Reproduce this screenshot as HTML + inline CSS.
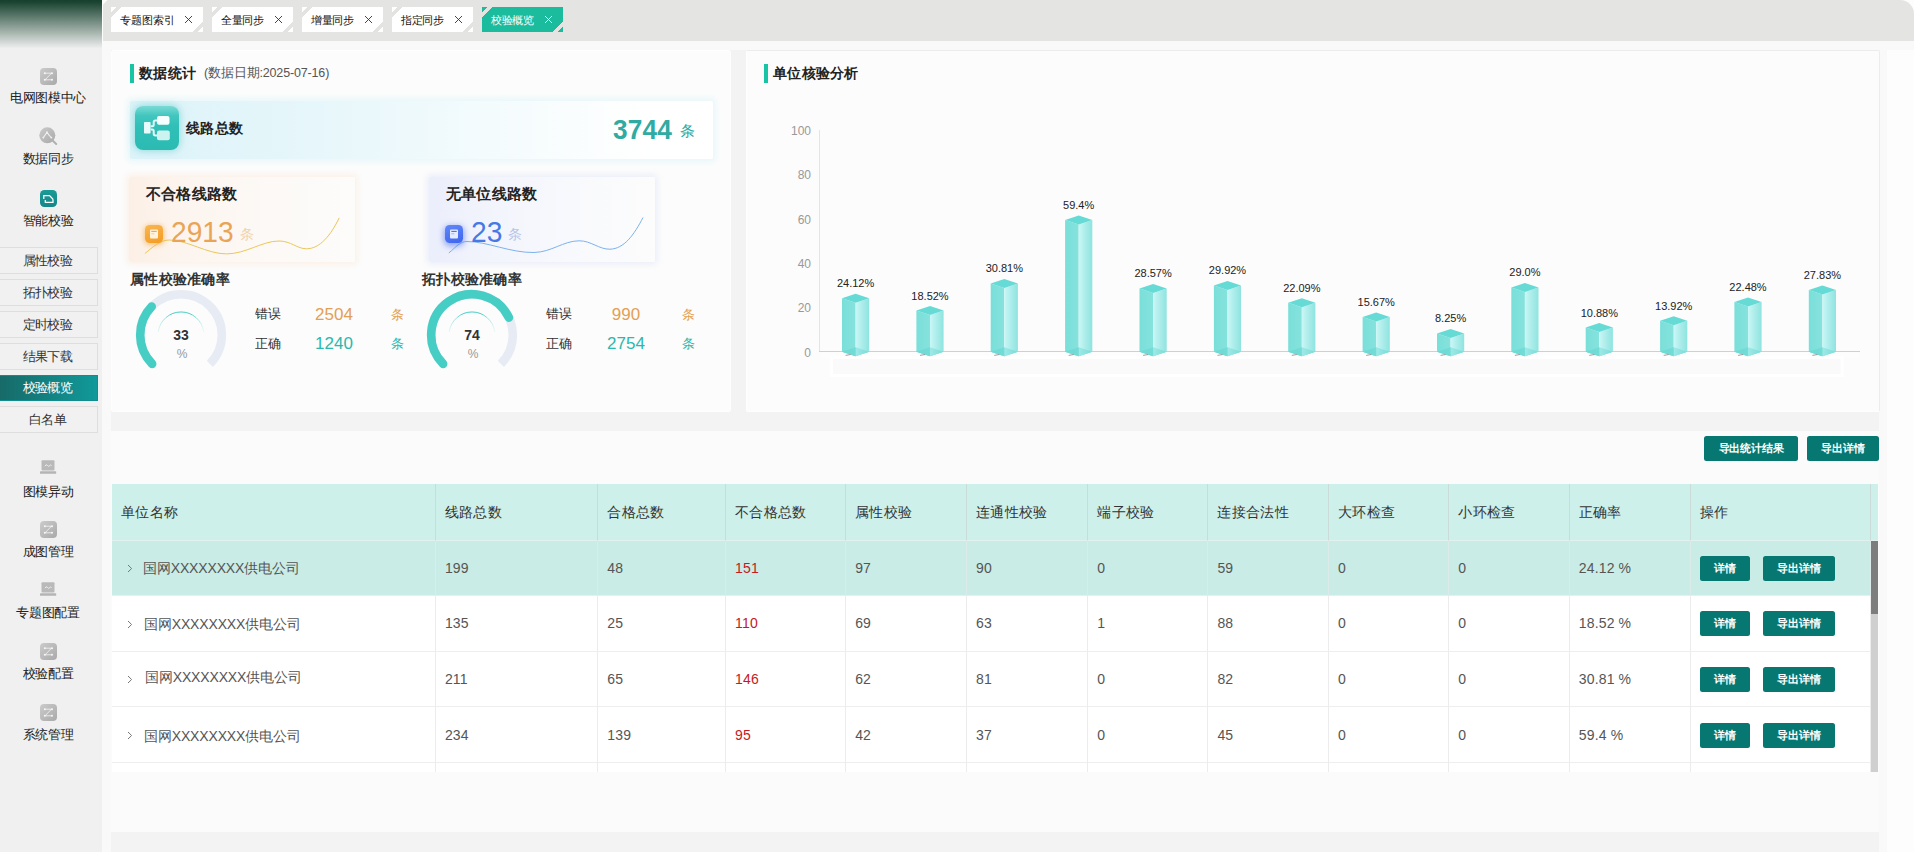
<!DOCTYPE html>
<html lang="zh"><head><meta charset="utf-8"><title>校验概览</title>
<style>
*{box-sizing:border-box;margin:0;padding:0}
html,body{width:1914px;height:852px;overflow:hidden;background:#fdfdfd;font-family:"Liberation Sans",sans-serif;color:#333}
.abs{position:absolute}
#side{position:absolute;left:0;top:0;width:102px;height:852px;background:#f0f0f0}
#sidetop{position:absolute;left:0;top:0;width:102px;height:50px;background:linear-gradient(to bottom,#163f2d 0%,#1c4533 5%,#f0f0f0 97%)}
.mi{position:absolute;left:0;width:96px;text-align:center;font-size:13px;letter-spacing:-0.3px;color:#222;line-height:16px;white-space:nowrap}
.sub{white-space:nowrap;overflow:hidden;position:absolute;left:-1px;width:99px;height:27px;border:1px solid #dedede;background:#f1f1f1;text-align:center;font-size:12.5px;letter-spacing:-0.6px;line-height:26.5px;color:#333;padding-right:2px}
.sub.on{height:26px;line-height:25px;background:linear-gradient(to right,#176a68,#11999a);border-color:#128d8d;color:#fff}
#topbar{position:absolute;left:103px;top:0;width:1811px;height:41px;background:linear-gradient(135deg,#fbfbfb 0,#fbfbfb 3px,#e4e4e3 3.6px);border-radius:0 14px 0 0}
.tab{position:absolute;top:7px;height:25px;width:91px;font-size:11px;letter-spacing:-0.45px;line-height:26.5px;color:#111;padding-left:9px;overflow:hidden;white-space:nowrap;
 background:linear-gradient(135deg,#fff 0,#fff 4.2px,#e3e3e2 4.2px,#e3e3e2 7.2px,#fff 7.2px,#fff 50%,transparent 50%),linear-gradient(315deg,#fff 0,#fff 4.2px,#e3e3e2 4.2px,#e3e3e2 7.3px,#fff 7.3px,#fff 50.5%,transparent 50.5%)}
.tab.on{color:#fff;background:linear-gradient(135deg,#1bbc9d 0,#1bbc9d 4.2px,#e3e3e2 4.2px,#e3e3e2 7.2px,#1bbc9d 7.2px,#1bbc9d 50%,transparent 50%),linear-gradient(315deg,#1bbc9d 0,#1bbc9d 4.2px,#e3e3e2 4.2px,#e3e3e2 7.3px,#1bbc9d 7.3px,#1bbc9d 50.5%,transparent 50.5%)}
.tab svg{position:absolute;left:72px;top:8.3px}
#main{position:absolute;left:102px;top:41px;width:1777px;height:811px;background:#f3f3f3}
#strip{position:absolute;left:102px;top:41px;width:1812px;height:9px;background:#f9f9f9}
#gut{position:absolute;left:102px;top:41px;width:9px;height:811px;background:#f9f9f9}
#rgut{position:absolute;left:1879px;top:41px;width:8px;height:811px;background:#f9f9f9}
.panel{position:absolute;background:#fcfcfc}
.ttl{position:absolute;font-size:14px;font-weight:bold;color:#222;line-height:18px;white-space:nowrap;letter-spacing:0.3px}
.tbar{position:absolute;width:4px;height:19px;background:#17c4a4}
.h2{position:absolute;font-size:14px;font-weight:bold;color:#333;line-height:18px;white-space:nowrap;letter-spacing:0.3px}
.lab{position:absolute;font-size:13px;color:#333;line-height:16px;white-space:nowrap;letter-spacing:-0.5px}
.num{position:absolute;font-size:17px;line-height:20px;white-space:nowrap;text-align:center;width:60px}
.unit{position:absolute;font-size:13px;line-height:16px;white-space:nowrap}
.or{color:#e3a052}.te{color:#2bb8ae}
.yl{position:absolute;width:30px;text-align:right;font-size:12px;color:#999;line-height:14px}
.bl{position:absolute;width:70px;text-align:center;font-size:11px;color:#222;line-height:14px;white-space:nowrap}
.btn{position:absolute;background:#067871;color:#fff;font-size:11px;font-weight:bold;text-align:center;border-radius:2.5px;white-space:nowrap;letter-spacing:-0.2px}
.th{position:absolute;top:484.4px;height:56.3px;background:#cdf0ea;border-right:1px solid #cbdcd8;border-bottom:1px solid #e2f1ee;font-size:14px;color:#333;line-height:57px;padding-left:9px;white-space:nowrap;letter-spacing:0.3px}
.td{position:absolute;height:56px;border-right:1px solid #ececec;border-bottom:1px solid #eeeeee;font-size:14px;color:#555;padding-left:9px;white-space:nowrap;background:#fff;letter-spacing:0.15px;overflow:hidden}
.td.hl{background:#c9ece6;border-right-color:#dcebe8;border-bottom-color:#e4f1ee}
.red{color:#c61a22}
</style></head><body>

<div id="side"><div id="sidetop"></div>
<svg class="abs" style="left:40px;top:68px" width="17" height="17" viewBox="0 0 17 17"><defs><linearGradient id="gg" x1="0" y1="0" x2="1" y2="1"><stop offset="0" stop-color="#cbcbcb"/><stop offset="1" stop-color="#a9a9a9"/></linearGradient></defs><rect x="0" y="0" width="17" height="17" rx="4" fill="url(#gg)"/><path d="M5 5.2h6.5M5 11.8h6.5M11.5 5.2L5 11.8" stroke="#f6f6f6" stroke-width="0.8" fill="none" stroke-linecap="round"/><circle cx="4.8" cy="5.2" r="1" fill="#f6f6f6"/><circle cx="12" cy="5.2" r="1" fill="#f6f6f6"/><circle cx="4.8" cy="11.8" r="1" fill="#f6f6f6"/><circle cx="12" cy="11.8" r="1" fill="#f6f6f6"/></svg>
<div class="mi" style="top:90px">电网图模中心</div>
<svg class="abs" style="left:39px;top:127px" width="19" height="19" viewBox="0 0 19 19"><circle cx="8.3" cy="8.3" r="8" fill="url(#gg)"/><path d="M13.6 13.6l3.6 3.4" stroke="#b0b0b0" stroke-width="2" stroke-linecap="round"/><path d="M4.3 10.6L8 5.2l2.2 3.2 2.2 2.2" stroke="#f0f0f0" stroke-width="1.1" fill="none" stroke-linecap="round" stroke-linejoin="round"/><circle cx="8" cy="5.2" r="0.9" fill="#f0f0f0"/><circle cx="4.3" cy="10.6" r="0.9" fill="#f0f0f0"/><circle cx="12.4" cy="10.6" r="0.9" fill="#f0f0f0"/></svg>
<div class="mi" style="top:151px">数据同步</div>
<svg class="abs" style="left:40px;top:190.2px" width="17" height="17" viewBox="0 0 17 17"><defs><linearGradient id="tg" x1="0" y1="0" x2="0" y2="1"><stop offset="0" stop-color="#1a9b97"/><stop offset="1" stop-color="#15868a"/></linearGradient></defs><rect width="17" height="17" rx="4.4" fill="url(#tg)"/><path d="M3.8 9V5.6h5.8l3.4 3.6M5.3 10v2.3h7.7V9.2" stroke="#fff" stroke-width="1.25" fill="none" stroke-linejoin="miter"/></svg>
<div class="mi" style="top:213px">智能校验</div>
<div class="sub" style="top:247px">属性校验</div>
<div class="sub" style="top:279px">拓扑校验</div>
<div class="sub" style="top:311px">定时校验</div>
<div class="sub" style="top:343px">结果下载</div>
<div class="sub on" style="top:375px">校验概览</div>
<div class="sub" style="top:406px">白名单</div>
<svg class="abs" style="left:40px;top:460px" width="17" height="15" viewBox="0 0 17 15"><rect x="1.5" y="0.3" width="13" height="10.3" rx="1" fill="#b9b9b9"/><path d="M5.2 5.8q1-2.2 2.2-0.4t2.3 0.2q0.8-1.2 1.6-0.3" stroke="#f0f0f0" stroke-width="1" fill="none" stroke-linecap="round"/><rect x="0" y="11.2" width="16.2" height="2.6" rx="0.6" fill="#b4b4b4"/></svg>
<div class="mi" style="top:484px">图模异动</div>
<svg class="abs" style="left:40px;top:521px" width="17" height="17" viewBox="0 0 17 17"><defs><linearGradient id="gg" x1="0" y1="0" x2="1" y2="1"><stop offset="0" stop-color="#cbcbcb"/><stop offset="1" stop-color="#a9a9a9"/></linearGradient></defs><rect x="0" y="0" width="17" height="17" rx="4" fill="url(#gg)"/><path d="M5 5.2h6.5M5 11.8h6.5M11.5 5.2L5 11.8" stroke="#f6f6f6" stroke-width="0.8" fill="none" stroke-linecap="round"/><circle cx="4.8" cy="5.2" r="1" fill="#f6f6f6"/><circle cx="12" cy="5.2" r="1" fill="#f6f6f6"/><circle cx="4.8" cy="11.8" r="1" fill="#f6f6f6"/><circle cx="12" cy="11.8" r="1" fill="#f6f6f6"/></svg>
<div class="mi" style="top:544px">成图管理</div>
<svg class="abs" style="left:40px;top:582px" width="17" height="15" viewBox="0 0 17 15"><rect x="1.5" y="0.3" width="13" height="10.3" rx="1" fill="#b9b9b9"/><path d="M5.2 5.8q1-2.2 2.2-0.4t2.3 0.2q0.8-1.2 1.6-0.3" stroke="#f0f0f0" stroke-width="1" fill="none" stroke-linecap="round"/><rect x="0" y="11.2" width="16.2" height="2.6" rx="0.6" fill="#b4b4b4"/></svg>
<div class="mi" style="top:605px">专题图配置</div>
<svg class="abs" style="left:40px;top:643px" width="17" height="17" viewBox="0 0 17 17"><defs><linearGradient id="gg" x1="0" y1="0" x2="1" y2="1"><stop offset="0" stop-color="#cbcbcb"/><stop offset="1" stop-color="#a9a9a9"/></linearGradient></defs><rect x="0" y="0" width="17" height="17" rx="4" fill="url(#gg)"/><path d="M5 5.2h6.5M5 11.8h6.5M11.5 5.2L5 11.8" stroke="#f6f6f6" stroke-width="0.8" fill="none" stroke-linecap="round"/><circle cx="4.8" cy="5.2" r="1" fill="#f6f6f6"/><circle cx="12" cy="5.2" r="1" fill="#f6f6f6"/><circle cx="4.8" cy="11.8" r="1" fill="#f6f6f6"/><circle cx="12" cy="11.8" r="1" fill="#f6f6f6"/></svg>
<div class="mi" style="top:666px">校验配置</div>
<svg class="abs" style="left:40px;top:704px" width="17" height="17" viewBox="0 0 17 17"><defs><linearGradient id="gg" x1="0" y1="0" x2="1" y2="1"><stop offset="0" stop-color="#cbcbcb"/><stop offset="1" stop-color="#a9a9a9"/></linearGradient></defs><rect x="0" y="0" width="17" height="17" rx="4" fill="url(#gg)"/><path d="M5 5.2h6.5M5 11.8h6.5M11.5 5.2L5 11.8" stroke="#f6f6f6" stroke-width="0.8" fill="none" stroke-linecap="round"/><circle cx="4.8" cy="5.2" r="1" fill="#f6f6f6"/><circle cx="12" cy="5.2" r="1" fill="#f6f6f6"/><circle cx="4.8" cy="11.8" r="1" fill="#f6f6f6"/><circle cx="12" cy="11.8" r="1" fill="#f6f6f6"/></svg>
<div class="mi" style="top:727px">系统管理</div>
</div>
<div id="topbar"></div>
<div class="tab" style="left:111px;width:92px;letter-spacing:-0.05px">专题图索引<svg style="left:73px" width="9" height="9" viewBox="0 0 9 9"><path d="M1 1l7 7M8 1l-7 7" stroke="#333" stroke-width="0.9" fill="none"/></svg></div>
<div class="tab" style="left:212px;width:81px">全量同步<svg style="left:62px" width="9" height="9" viewBox="0 0 9 9"><path d="M1 1l7 7M8 1l-7 7" stroke="#333" stroke-width="0.9" fill="none"/></svg></div>
<div class="tab" style="left:302px;width:81px">增量同步<svg style="left:62px" width="9" height="9" viewBox="0 0 9 9"><path d="M1 1l7 7M8 1l-7 7" stroke="#333" stroke-width="0.9" fill="none"/></svg></div>
<div class="tab" style="left:392px;width:81px">指定同步<svg style="left:62px" width="9" height="9" viewBox="0 0 9 9"><path d="M1 1l7 7M8 1l-7 7" stroke="#333" stroke-width="0.9" fill="none"/></svg></div>
<div class="tab on" style="left:482px;width:81px">校验概览<svg style="left:62px" width="9" height="9" viewBox="0 0 9 9"><path d="M1 1l7 7M8 1l-7 7" stroke="#fff" stroke-width="0.9" fill="none"/></svg></div>
<div id="main"></div><div id="strip"></div><div id="gut"></div><div id="rgut"></div>
<div class="panel" style="left:111px;top:50px;width:620px;height:362px;border:1px solid #fefefe;border-radius:2px"></div>
<div class="panel" style="left:745.5px;top:49.5px;width:1134px;height:362.5px;border:1px solid #ececec;border-left-color:#fefefe;border-bottom-color:#fefefe;border-radius:2px"></div>
<div class="panel" style="left:111px;top:430.5px;width:1768px;height:401px;background:#fbfbfb"></div>
<div class="tbar" style="left:130px;top:64px"></div><div class="ttl" style="left:139px;top:64px">数据统计</div>
<div class="abs" style="left:204px;top:65px;font-size:12.5px;color:#555;line-height:16px;white-space:nowrap;letter-spacing:-0.15px">(数据日期:2025-07-16)</div>
<div class="tbar" style="left:764px;top:64px"></div><div class="ttl" style="left:773px;top:64px">单位核验分析</div>
<div class="abs" style="left:130px;top:101px;width:583px;height:58px;background:linear-gradient(to right,#dcf3f9 0%,#e6f6fa 30%,#f3fbfd 60%,#ffffff 90%);box-shadow:0 0 6px 2px rgba(225,245,248,0.9);border-radius:2px"></div>
<div class="abs" style="left:135px;top:106px;width:44px;height:44px;border-radius:8px;background:linear-gradient(to bottom,#7bdad5 0%,#42c6bf 22%,#31c0b8 45%,#2cbbb3 100%);box-shadow:0 0 7px 1px rgba(70,200,195,0.5)"></div>
<svg class="abs" style="left:135px;top:106px" width="44" height="44" viewBox="0 0 44 44"><rect x="9" y="16" width="6.6" height="11.6" rx="0.8" fill="#e9fafa"/><rect x="22" y="10" width="12.5" height="8.8" rx="2" fill="#f6fefe"/><rect x="22" y="24.6" width="12.8" height="9.7" rx="2" fill="#cdf3f1"/><path d="M15.6 20.2h1.6q1.5 0 1.5-1.5v-2.4q0-1.7 1.7-1.7h1.8M15.6 23.6h1.6q1.5 0 1.5 1.5v2.7q0 1.7 1.7 1.7h1.8" stroke="#e4f9f8" stroke-width="2" fill="none"/></svg>
<div class="h2" style="left:186px;top:119px;color:#222">线路总数</div>
<div class="abs" style="left:613px;top:112px;font-size:28.2px;font-weight:bold;color:#30aaa2;line-height:34px;letter-spacing:0.2px;transform:scaleX(0.93);transform-origin:left">3744</div>
<div class="abs" style="left:679.5px;top:122px;font-size:14.5px;color:#30aaa2;line-height:18px">条</div>
<div class="abs" style="left:129px;top:177px;width:226px;height:85px;background:linear-gradient(to right,#fcf0e6 0%,#fcf5ef 25%,#fcf9f6 60%,#fcfcfb 100%);box-shadow:0 0 6px 2px rgba(250,232,214,0.6);border-radius:2px"></div>
<div class="h2" style="left:146px;top:185px;color:#222;font-size:14.5px;letter-spacing:0.2px">不合格线路数</div>
<svg class="abs" style="left:129px;top:177px" width="226" height="85" viewBox="0 0 226 85"><path d="M15.9 76.5 C24 70 31 63 40.4 63 C58 63 78 76.9 97.4 76.9 C117 76.9 133 64 150 64 C162 64 168 71.8 177.5 71.8 C191 71.8 202 58 210.2 40.8" stroke="#eac858" stroke-width="1" fill="none"/></svg>
<div class="abs" style="left:145px;top:225px;width:18px;height:18px;border-radius:4.5px;background:linear-gradient(160deg,#f9b650,#f39c24);box-shadow:0 1px 5px 1px rgba(246,165,60,0.6)"></div>
<svg class="abs" style="left:145px;top:225px" width="18" height="18" viewBox="0 0 18 18"><rect x="5" y="4.5" width="8" height="9" rx="1" fill="#fff3df"/><path d="M6.3 6.4h5.4" stroke="#f5a43a" stroke-width="1.1"/><path d="M6.3 8.8h3" stroke="#f8c27a" stroke-width="0.8"/></svg>
<div class="abs" style="left:171px;top:214.2px;font-size:29.8px;color:#e9a456;line-height:36px;transform:scaleX(0.945);transform-origin:left">2913</div>
<div class="abs" style="left:240px;top:226px;font-size:13.5px;color:#f0d2ac;line-height:18px">条</div>
<div class="abs" style="left:429px;top:177px;width:226px;height:85px;background:linear-gradient(to right,#ebeefb 0%,#f2f4fc 25%,#f8f9fd 60%,#fcfcfc 100%);box-shadow:0 0 6px 2px rgba(226,231,250,0.7);border-radius:2px"></div>
<div class="h2" style="left:446px;top:185px;color:#222;font-size:14.5px;letter-spacing:0.2px">无单位线路数</div>
<svg class="abs" style="left:429px;top:177px" width="226" height="85" viewBox="0 0 226 85"><path d="M19.8 76 C27 70 31 64.5 38 64.5 C58 64.5 82 76 105 75.5 C123 75 134 64 150 63.8 C162 63.6 170 72.5 181 72.2 C195 71.8 205 58 214 40.5" stroke="#7db2ec" stroke-width="1" fill="none"/></svg>
<div class="abs" style="left:445px;top:225px;width:18px;height:18px;border-radius:4.5px;background:linear-gradient(160deg,#6088f8,#3f64ee);box-shadow:0 2px 6px 1px rgba(75,110,240,0.6)"></div>
<svg class="abs" style="left:445px;top:225px" width="18" height="18" viewBox="0 0 18 18"><rect x="5" y="4.5" width="8" height="9" rx="1" fill="#e6ecff"/><path d="M6.3 6.4h5.4" stroke="#4a6cf0" stroke-width="1.1"/><path d="M6.3 8.8h3" stroke="#8fa6f6" stroke-width="0.8"/></svg>
<div class="abs" style="left:470.8px;top:214.2px;font-size:29.8px;color:#4878e6;line-height:36px;transform:scaleX(0.945);transform-origin:left">23</div>
<div class="abs" style="left:508px;top:226px;font-size:13.5px;color:#b4c5e8;line-height:18px">条</div>
<div class="h2" style="left:130px;top:270px">属性校验准确率</div>
<svg class="abs" style="left:131px;top:285px" width="100" height="100" viewBox="0 0 100 100"><defs><linearGradient id="g1" x1="0" x2="1" y1="0" y2="0"><stop offset="0" stop-color="#46cdc4" stop-opacity="0.15"/><stop offset="0.3" stop-color="#46cdc4"/><stop offset="0.7" stop-color="#46cdc4"/><stop offset="1" stop-color="#46cdc4" stop-opacity="0.1"/></linearGradient></defs><path d="M21.15 78.85 A40.8 40.8 0 1 1 78.85 78.85" stroke="#e7ebf3" stroke-width="8.6" fill="none"/><path d="M21.15 78.85 A40.8 40.8 0 0 1 20.70 21.61" stroke="#46cdc4" stroke-width="8.6" fill="none" stroke-linecap="round"/><path d="M27.22 46.80 A23 23 0 0 1 72.78 46.80" stroke="url(#g1)" stroke-width="1" fill="none"/></svg><div class="abs" style="left:161px;top:325.5px;width:40px;text-align:center;font-size:14px;font-weight:bold;color:#333;line-height:18px">33</div><div class="abs" style="left:162px;top:346px;width:40px;text-align:center;font-size:12px;color:#999;line-height:16px">%</div>
<div class="lab" style="left:255px;top:306px">错误</div><div class="num or" style="left:304px;top:304.8px">2504</div><div class="unit or" style="left:391px;top:306.5px">条</div>
<div class="lab" style="left:255px;top:336px">正确</div><div class="num te" style="left:304px;top:333.8px">1240</div><div class="unit te" style="left:391px;top:336px">条</div>
<div class="h2" style="left:422px;top:270px">拓扑校验准确率</div>
<svg class="abs" style="left:422px;top:285px" width="100" height="100" viewBox="0 0 100 100"><defs><linearGradient id="g2" x1="0" x2="1" y1="0" y2="0"><stop offset="0" stop-color="#46cdc4" stop-opacity="0.15"/><stop offset="0.3" stop-color="#46cdc4"/><stop offset="0.7" stop-color="#46cdc4"/><stop offset="1" stop-color="#46cdc4" stop-opacity="0.1"/></linearGradient></defs><path d="M21.15 78.85 A40.8 40.8 0 1 1 78.85 78.85" stroke="#e7ebf3" stroke-width="8.6" fill="none"/><path d="M21.15 78.85 A40.8 40.8 0 1 1 86.92 32.63" stroke="#46cdc4" stroke-width="8.6" fill="none" stroke-linecap="round"/><path d="M27.22 46.80 A23 23 0 0 1 72.78 46.80" stroke="url(#g2)" stroke-width="1" fill="none"/></svg><div class="abs" style="left:452px;top:325.5px;width:40px;text-align:center;font-size:14px;font-weight:bold;color:#333;line-height:18px">74</div><div class="abs" style="left:453px;top:346px;width:40px;text-align:center;font-size:12px;color:#999;line-height:16px">%</div>
<div class="lab" style="left:546px;top:306px">错误</div><div class="num or" style="left:596px;top:304.8px">990</div><div class="unit or" style="left:682px;top:306.5px">条</div>
<div class="lab" style="left:546px;top:336px">正确</div><div class="num te" style="left:596px;top:333.8px">2754</div><div class="unit te" style="left:682px;top:336px">条</div>
<div class="yl" style="left:781px;top:345.5px">0</div>
<div class="yl" style="left:781px;top:301.2px">20</div>
<div class="yl" style="left:781px;top:256.8px">40</div>
<div class="yl" style="left:781px;top:212.5px">60</div>
<div class="yl" style="left:781px;top:168.2px">80</div>
<div class="yl" style="left:781px;top:123.8px">100</div>
<svg class="abs" style="left:745px;top:50px" width="1134" height="361" viewBox="745 50 1134 361"><defs><linearGradient id="bl" x1="0" x2="1" y1="0" y2="0"><stop offset="0" stop-color="#7adfd9"/><stop offset="1" stop-color="#86e2dd"/></linearGradient><linearGradient id="br" x1="0" x2="1" y1="0" y2="0"><stop offset="0" stop-color="#c9f7f6"/><stop offset="0.45" stop-color="#aeedeb"/><stop offset="1" stop-color="#8ee4e0"/></linearGradient></defs><path d="M819.5 130V352" stroke="#e4e4e4" stroke-width="1"/><path d="M819 351.5H1860" stroke="#d0d0d0" stroke-width="1"/><rect x="822" y="352.5" width="1037" height="5" fill="#fdfdfd"/><rect x="831.5" y="357.5" width="1010.5" height="18" fill="#fafafa" stroke="#ffffff" stroke-width="3"/><path d="M842.0 351.7 L855.6 356.2 L869.2 351.7 L855.6 347.2Z" fill="#63d8d2" opacity="0.9"/><path d="M842.0 298.2 L855.6 302.7 L855.6 356.2 L842.0 351.7Z" fill="url(#bl)"/><path d="M855.6 302.7 L869.2 298.2 L869.2 351.7 L855.6 356.2Z" fill="url(#br)"/><path d="M842.0 351.7 L855.6 347.2 L869.2 351.7 L855.6 356.2Z" fill="#4fd0ca" opacity="0.35"/><path d="M842.0 298.2 L855.6 293.7 L869.2 298.2 L855.6 302.7Z" fill="#66dad5"/><path d="M916.4 351.7 L930.0 356.2 L943.6 351.7 L930.0 347.2Z" fill="#63d8d2" opacity="0.9"/><path d="M916.4 310.6 L930.0 315.1 L930.0 356.2 L916.4 351.7Z" fill="url(#bl)"/><path d="M930.0 315.1 L943.6 310.6 L943.6 351.7 L930.0 356.2Z" fill="url(#br)"/><path d="M916.4 351.7 L930.0 347.2 L943.6 351.7 L930.0 356.2Z" fill="#4fd0ca" opacity="0.35"/><path d="M916.4 310.6 L930.0 306.1 L943.6 310.6 L930.0 315.1Z" fill="#66dad5"/><path d="M990.7 351.7 L1004.3 356.2 L1017.9 351.7 L1004.3 347.2Z" fill="#63d8d2" opacity="0.9"/><path d="M990.7 283.4 L1004.3 287.9 L1004.3 356.2 L990.7 351.7Z" fill="url(#bl)"/><path d="M1004.3 287.9 L1017.9 283.4 L1017.9 351.7 L1004.3 356.2Z" fill="url(#br)"/><path d="M990.7 351.7 L1004.3 347.2 L1017.9 351.7 L1004.3 356.2Z" fill="#4fd0ca" opacity="0.35"/><path d="M990.7 283.4 L1004.3 278.9 L1017.9 283.4 L1004.3 287.9Z" fill="#66dad5"/><path d="M1065.1 351.7 L1078.7 356.2 L1092.3 351.7 L1078.7 347.2Z" fill="#63d8d2" opacity="0.9"/><path d="M1065.1 220.0 L1078.7 224.5 L1078.7 356.2 L1065.1 351.7Z" fill="url(#bl)"/><path d="M1078.7 224.5 L1092.3 220.0 L1092.3 351.7 L1078.7 356.2Z" fill="url(#br)"/><path d="M1065.1 351.7 L1078.7 347.2 L1092.3 351.7 L1078.7 356.2Z" fill="#4fd0ca" opacity="0.35"/><path d="M1065.1 220.0 L1078.7 215.5 L1092.3 220.0 L1078.7 224.5Z" fill="#66dad5"/><path d="M1139.5 351.7 L1153.1 356.2 L1166.7 351.7 L1153.1 347.2Z" fill="#63d8d2" opacity="0.9"/><path d="M1139.5 288.4 L1153.1 292.9 L1153.1 356.2 L1139.5 351.7Z" fill="url(#bl)"/><path d="M1153.1 292.9 L1166.7 288.4 L1166.7 351.7 L1153.1 356.2Z" fill="url(#br)"/><path d="M1139.5 351.7 L1153.1 347.2 L1166.7 351.7 L1153.1 356.2Z" fill="#4fd0ca" opacity="0.35"/><path d="M1139.5 288.4 L1153.1 283.9 L1166.7 288.4 L1153.1 292.9Z" fill="#66dad5"/><path d="M1213.9 351.7 L1227.5 356.2 L1241.0 351.7 L1227.5 347.2Z" fill="#63d8d2" opacity="0.9"/><path d="M1213.9 285.4 L1227.5 289.9 L1227.5 356.2 L1213.9 351.7Z" fill="url(#bl)"/><path d="M1227.5 289.9 L1241.0 285.4 L1241.0 351.7 L1227.5 356.2Z" fill="url(#br)"/><path d="M1213.9 351.7 L1227.5 347.2 L1241.0 351.7 L1227.5 356.2Z" fill="#4fd0ca" opacity="0.35"/><path d="M1213.9 285.4 L1227.5 280.9 L1241.0 285.4 L1227.5 289.9Z" fill="#66dad5"/><path d="M1288.2 351.7 L1301.8 356.2 L1315.4 351.7 L1301.8 347.2Z" fill="#63d8d2" opacity="0.9"/><path d="M1288.2 302.7 L1301.8 307.2 L1301.8 356.2 L1288.2 351.7Z" fill="url(#bl)"/><path d="M1301.8 307.2 L1315.4 302.7 L1315.4 351.7 L1301.8 356.2Z" fill="url(#br)"/><path d="M1288.2 351.7 L1301.8 347.2 L1315.4 351.7 L1301.8 356.2Z" fill="#4fd0ca" opacity="0.35"/><path d="M1288.2 302.7 L1301.8 298.2 L1315.4 302.7 L1301.8 307.2Z" fill="#66dad5"/><path d="M1362.6 351.7 L1376.2 356.2 L1389.8 351.7 L1376.2 347.2Z" fill="#63d8d2" opacity="0.9"/><path d="M1362.6 317.0 L1376.2 321.5 L1376.2 356.2 L1362.6 351.7Z" fill="url(#bl)"/><path d="M1376.2 321.5 L1389.8 317.0 L1389.8 351.7 L1376.2 356.2Z" fill="url(#br)"/><path d="M1362.6 351.7 L1376.2 347.2 L1389.8 351.7 L1376.2 356.2Z" fill="#4fd0ca" opacity="0.35"/><path d="M1362.6 317.0 L1376.2 312.5 L1389.8 317.0 L1376.2 321.5Z" fill="#66dad5"/><path d="M1437.0 351.7 L1450.6 356.2 L1464.2 351.7 L1450.6 347.2Z" fill="#63d8d2" opacity="0.9"/><path d="M1437.0 333.4 L1450.6 337.9 L1450.6 356.2 L1437.0 351.7Z" fill="url(#bl)"/><path d="M1450.6 337.9 L1464.2 333.4 L1464.2 351.7 L1450.6 356.2Z" fill="url(#br)"/><path d="M1437.0 351.7 L1450.6 347.2 L1464.2 351.7 L1450.6 356.2Z" fill="#4fd0ca" opacity="0.35"/><path d="M1437.0 333.4 L1450.6 328.9 L1464.2 333.4 L1450.6 337.9Z" fill="#66dad5"/><path d="M1511.3 351.7 L1524.9 356.2 L1538.5 351.7 L1524.9 347.2Z" fill="#63d8d2" opacity="0.9"/><path d="M1511.3 287.4 L1524.9 291.9 L1524.9 356.2 L1511.3 351.7Z" fill="url(#bl)"/><path d="M1524.9 291.9 L1538.5 287.4 L1538.5 351.7 L1524.9 356.2Z" fill="url(#br)"/><path d="M1511.3 351.7 L1524.9 347.2 L1538.5 351.7 L1524.9 356.2Z" fill="#4fd0ca" opacity="0.35"/><path d="M1511.3 287.4 L1524.9 282.9 L1538.5 287.4 L1524.9 291.9Z" fill="#66dad5"/><path d="M1585.7 351.7 L1599.3 356.2 L1612.9 351.7 L1599.3 347.2Z" fill="#63d8d2" opacity="0.9"/><path d="M1585.7 327.6 L1599.3 332.1 L1599.3 356.2 L1585.7 351.7Z" fill="url(#bl)"/><path d="M1599.3 332.1 L1612.9 327.6 L1612.9 351.7 L1599.3 356.2Z" fill="url(#br)"/><path d="M1585.7 351.7 L1599.3 347.2 L1612.9 351.7 L1599.3 356.2Z" fill="#4fd0ca" opacity="0.35"/><path d="M1585.7 327.6 L1599.3 323.1 L1612.9 327.6 L1599.3 332.1Z" fill="#66dad5"/><path d="M1660.1 351.7 L1673.7 356.2 L1687.3 351.7 L1673.7 347.2Z" fill="#63d8d2" opacity="0.9"/><path d="M1660.1 320.8 L1673.7 325.3 L1673.7 356.2 L1660.1 351.7Z" fill="url(#bl)"/><path d="M1673.7 325.3 L1687.3 320.8 L1687.3 351.7 L1673.7 356.2Z" fill="url(#br)"/><path d="M1660.1 351.7 L1673.7 347.2 L1687.3 351.7 L1673.7 356.2Z" fill="#4fd0ca" opacity="0.35"/><path d="M1660.1 320.8 L1673.7 316.3 L1687.3 320.8 L1673.7 325.3Z" fill="#66dad5"/><path d="M1734.4 351.7 L1748.0 356.2 L1761.6 351.7 L1748.0 347.2Z" fill="#63d8d2" opacity="0.9"/><path d="M1734.4 301.9 L1748.0 306.4 L1748.0 356.2 L1734.4 351.7Z" fill="url(#bl)"/><path d="M1748.0 306.4 L1761.6 301.9 L1761.6 351.7 L1748.0 356.2Z" fill="url(#br)"/><path d="M1734.4 351.7 L1748.0 347.2 L1761.6 351.7 L1748.0 356.2Z" fill="#4fd0ca" opacity="0.35"/><path d="M1734.4 301.9 L1748.0 297.4 L1761.6 301.9 L1748.0 306.4Z" fill="#66dad5"/><path d="M1808.8 351.7 L1822.4 356.2 L1836.0 351.7 L1822.4 347.2Z" fill="#63d8d2" opacity="0.9"/><path d="M1808.8 290.0 L1822.4 294.5 L1822.4 356.2 L1808.8 351.7Z" fill="url(#bl)"/><path d="M1822.4 294.5 L1836.0 290.0 L1836.0 351.7 L1822.4 356.2Z" fill="url(#br)"/><path d="M1808.8 351.7 L1822.4 347.2 L1836.0 351.7 L1822.4 356.2Z" fill="#4fd0ca" opacity="0.35"/><path d="M1808.8 290.0 L1822.4 285.5 L1836.0 290.0 L1822.4 294.5Z" fill="#66dad5"/><path d="M845.6 355.4l5-0.9" stroke="#888" stroke-width="0.8"/><path d="M920.0 355.4l5-0.9" stroke="#888" stroke-width="0.8"/><path d="M994.3 355.4l5-0.9" stroke="#888" stroke-width="0.8"/><path d="M1068.7 355.4l5-0.9" stroke="#888" stroke-width="0.8"/><path d="M1143.1 355.4l5-0.9" stroke="#888" stroke-width="0.8"/><path d="M1217.5 355.4l5-0.9" stroke="#888" stroke-width="0.8"/><path d="M1291.8 355.4l5-0.9" stroke="#888" stroke-width="0.8"/><path d="M1366.2 355.4l5-0.9" stroke="#888" stroke-width="0.8"/><path d="M1440.6 355.4l5-0.9" stroke="#888" stroke-width="0.8"/><path d="M1514.9 355.4l5-0.9" stroke="#888" stroke-width="0.8"/><path d="M1589.3 355.4l5-0.9" stroke="#888" stroke-width="0.8"/><path d="M1663.7 355.4l5-0.9" stroke="#888" stroke-width="0.8"/><path d="M1738.0 355.4l5-0.9" stroke="#888" stroke-width="0.8"/><path d="M1812.4 355.4l5-0.9" stroke="#888" stroke-width="0.8"/></svg>
<div class="bl" style="left:820.6px;top:276.1px">24.12%</div>
<div class="bl" style="left:895.0px;top:288.5px">18.52%</div>
<div class="bl" style="left:969.3px;top:261.3px">30.81%</div>
<div class="bl" style="left:1043.7px;top:197.9px">59.4%</div>
<div class="bl" style="left:1118.1px;top:266.3px">28.57%</div>
<div class="bl" style="left:1192.5px;top:263.3px">29.92%</div>
<div class="bl" style="left:1266.8px;top:280.6px">22.09%</div>
<div class="bl" style="left:1341.2px;top:294.9px">15.67%</div>
<div class="bl" style="left:1415.6px;top:311.3px">8.25%</div>
<div class="bl" style="left:1489.9px;top:265.3px">29.0%</div>
<div class="bl" style="left:1564.3px;top:305.5px">10.88%</div>
<div class="bl" style="left:1638.7px;top:298.7px">13.92%</div>
<div class="bl" style="left:1713.0px;top:279.8px">22.48%</div>
<div class="bl" style="left:1787.4px;top:267.9px">27.83%</div>
<div class="btn" style="left:1704px;top:436px;width:94px;height:25px;line-height:25px">导出统计结果</div>
<div class="btn" style="left:1807px;top:436px;width:72px;height:25px;line-height:25px">导出详情</div>
<div class="abs" style="left:111.5px;top:484.4px;width:1766.5px;height:287.1px;background:#fff;overflow:hidden"></div>
<div class="th" style="left:112px;width:323.9px">单位名称</div>
<div class="th" style="left:435.9px;width:162.39999999999998px">线路总数</div>
<div class="th" style="left:598.3px;width:127.80000000000007px">合格总数</div>
<div class="th" style="left:726.1px;width:120.10000000000002px">不合格总数</div>
<div class="th" style="left:846.2px;width:120.89999999999998px">属性校验</div>
<div class="th" style="left:967.1px;width:121.19999999999993px">连通性校验</div>
<div class="th" style="left:1088.3px;width:120.10000000000014px">端子校验</div>
<div class="th" style="left:1208.4px;width:120.69999999999982px">连接合法性</div>
<div class="th" style="left:1329.1px;width:120.20000000000005px">大环检查</div>
<div class="th" style="left:1449.3px;width:120.5px">小环检查</div>
<div class="th" style="left:1569.8px;width:121.29999999999995px">正确率</div>
<div class="th" style="left:1691.1px;width:179.5px">操作</div>
<div class="th" style="left:1870.6px;width:7.4px;padding:0;border-right:none"></div>
<div class="td hl" style="left:112px;top:540.7px;width:323.9px;height:55.59999999999991px;padding:0"><svg class="abs" style="left:15px;top:23.8px" width="6" height="9" viewBox="0 0 6 9"><path d="M1 1l3.6 3.5L1 8" stroke="#777" stroke-width="1" fill="none"/></svg><span class="abs" style="left:31px;top:18.3px;line-height:18px;color:#555;letter-spacing:-0.15px">国网XXXXXXXX供电公司</span></div>
<div class="td hl" style="left:435.9px;top:540.7px;width:162.39999999999998px;height:55.59999999999991px;line-height:55.6px">199</div>
<div class="td hl" style="left:598.3px;top:540.7px;width:127.80000000000007px;height:55.59999999999991px;line-height:55.6px">48</div>
<div class="td hl red" style="left:726.1px;top:540.7px;width:120.10000000000002px;height:55.59999999999991px;line-height:55.6px">151</div>
<div class="td hl" style="left:846.2px;top:540.7px;width:120.89999999999998px;height:55.59999999999991px;line-height:55.6px">97</div>
<div class="td hl" style="left:967.1px;top:540.7px;width:121.19999999999993px;height:55.59999999999991px;line-height:55.6px">90</div>
<div class="td hl" style="left:1088.3px;top:540.7px;width:120.10000000000014px;height:55.59999999999991px;line-height:55.6px">0</div>
<div class="td hl" style="left:1208.4px;top:540.7px;width:120.69999999999982px;height:55.59999999999991px;line-height:55.6px">59</div>
<div class="td hl" style="left:1329.1px;top:540.7px;width:120.20000000000005px;height:55.59999999999991px;line-height:55.6px">0</div>
<div class="td hl" style="left:1449.3px;top:540.7px;width:120.5px;height:55.59999999999991px;line-height:55.6px">0</div>
<div class="td hl" style="left:1569.8px;top:540.7px;width:121.29999999999995px;height:55.59999999999991px;line-height:55.6px">24.12 %</div>
<div class="td hl" style="left:1691.1px;top:540.7px;width:179.5px;height:55.59999999999991px"></div>
<div class="btn" style="left:1700px;top:556.0px;width:50px;height:25px;line-height:25px">详情</div>
<div class="btn" style="left:1763px;top:556.0px;width:72px;height:25px;line-height:25px">导出详情</div>
<div class="td" style="left:112px;top:596.3px;width:323.9px;height:55.40000000000009px;padding:0"><svg class="abs" style="left:15px;top:23.8px" width="6" height="9" viewBox="0 0 6 9"><path d="M1 1l3.6 3.5L1 8" stroke="#777" stroke-width="1" fill="none"/></svg><span class="abs" style="left:32px;top:19.2px;line-height:18px;color:#555;letter-spacing:-0.15px">国网XXXXXXXX供电公司</span></div>
<div class="td" style="left:435.9px;top:596.3px;width:162.39999999999998px;height:55.40000000000009px;line-height:54.4px">135</div>
<div class="td" style="left:598.3px;top:596.3px;width:127.80000000000007px;height:55.40000000000009px;line-height:54.4px">25</div>
<div class="td red" style="left:726.1px;top:596.3px;width:120.10000000000002px;height:55.40000000000009px;line-height:54.4px">110</div>
<div class="td" style="left:846.2px;top:596.3px;width:120.89999999999998px;height:55.40000000000009px;line-height:54.4px">69</div>
<div class="td" style="left:967.1px;top:596.3px;width:121.19999999999993px;height:55.40000000000009px;line-height:54.4px">63</div>
<div class="td" style="left:1088.3px;top:596.3px;width:120.10000000000014px;height:55.40000000000009px;line-height:54.4px">1</div>
<div class="td" style="left:1208.4px;top:596.3px;width:120.69999999999982px;height:55.40000000000009px;line-height:54.4px">88</div>
<div class="td" style="left:1329.1px;top:596.3px;width:120.20000000000005px;height:55.40000000000009px;line-height:54.4px">0</div>
<div class="td" style="left:1449.3px;top:596.3px;width:120.5px;height:55.40000000000009px;line-height:54.4px">0</div>
<div class="td" style="left:1569.8px;top:596.3px;width:121.29999999999995px;height:55.40000000000009px;line-height:54.4px">18.52 %</div>
<div class="td" style="left:1691.1px;top:596.3px;width:179.5px;height:55.40000000000009px"></div>
<div class="btn" style="left:1700px;top:611.0px;width:50px;height:25px;line-height:25px">详情</div>
<div class="btn" style="left:1763px;top:611.0px;width:72px;height:25px;line-height:25px">导出详情</div>
<div class="td" style="left:112px;top:651.7px;width:323.9px;height:55.59999999999991px;padding:0"><svg class="abs" style="left:15px;top:23.8px" width="6" height="9" viewBox="0 0 6 9"><path d="M1 1l3.6 3.5L1 8" stroke="#777" stroke-width="1" fill="none"/></svg><span class="abs" style="left:33px;top:16.3px;line-height:18px;color:#555;letter-spacing:-0.15px">国网XXXXXXXX供电公司</span></div>
<div class="td" style="left:435.9px;top:651.7px;width:162.39999999999998px;height:55.59999999999991px;line-height:55.6px">211</div>
<div class="td" style="left:598.3px;top:651.7px;width:127.80000000000007px;height:55.59999999999991px;line-height:55.6px">65</div>
<div class="td red" style="left:726.1px;top:651.7px;width:120.10000000000002px;height:55.59999999999991px;line-height:55.6px">146</div>
<div class="td" style="left:846.2px;top:651.7px;width:120.89999999999998px;height:55.59999999999991px;line-height:55.6px">62</div>
<div class="td" style="left:967.1px;top:651.7px;width:121.19999999999993px;height:55.59999999999991px;line-height:55.6px">81</div>
<div class="td" style="left:1088.3px;top:651.7px;width:120.10000000000014px;height:55.59999999999991px;line-height:55.6px">0</div>
<div class="td" style="left:1208.4px;top:651.7px;width:120.69999999999982px;height:55.59999999999991px;line-height:55.6px">82</div>
<div class="td" style="left:1329.1px;top:651.7px;width:120.20000000000005px;height:55.59999999999991px;line-height:55.6px">0</div>
<div class="td" style="left:1449.3px;top:651.7px;width:120.5px;height:55.59999999999991px;line-height:55.6px">0</div>
<div class="td" style="left:1569.8px;top:651.7px;width:121.29999999999995px;height:55.59999999999991px;line-height:55.6px">30.81 %</div>
<div class="td" style="left:1691.1px;top:651.7px;width:179.5px;height:55.59999999999991px"></div>
<div class="btn" style="left:1700px;top:667.0px;width:50px;height:25px;line-height:25px">详情</div>
<div class="btn" style="left:1763px;top:667.0px;width:72px;height:25px;line-height:25px">导出详情</div>
<div class="td" style="left:112px;top:707.3px;width:323.9px;height:55.700000000000045px;padding:0"><svg class="abs" style="left:15px;top:23.8px" width="6" height="9" viewBox="0 0 6 9"><path d="M1 1l3.6 3.5L1 8" stroke="#777" stroke-width="1" fill="none"/></svg><span class="abs" style="left:32px;top:19.7px;line-height:18px;color:#555;letter-spacing:-0.15px">国网XXXXXXXX供电公司</span></div>
<div class="td" style="left:435.9px;top:707.3px;width:162.39999999999998px;height:55.700000000000045px;line-height:56.4px">234</div>
<div class="td" style="left:598.3px;top:707.3px;width:127.80000000000007px;height:55.700000000000045px;line-height:56.4px">139</div>
<div class="td red" style="left:726.1px;top:707.3px;width:120.10000000000002px;height:55.700000000000045px;line-height:56.4px">95</div>
<div class="td" style="left:846.2px;top:707.3px;width:120.89999999999998px;height:55.700000000000045px;line-height:56.4px">42</div>
<div class="td" style="left:967.1px;top:707.3px;width:121.19999999999993px;height:55.700000000000045px;line-height:56.4px">37</div>
<div class="td" style="left:1088.3px;top:707.3px;width:120.10000000000014px;height:55.700000000000045px;line-height:56.4px">0</div>
<div class="td" style="left:1208.4px;top:707.3px;width:120.69999999999982px;height:55.700000000000045px;line-height:56.4px">45</div>
<div class="td" style="left:1329.1px;top:707.3px;width:120.20000000000005px;height:55.700000000000045px;line-height:56.4px">0</div>
<div class="td" style="left:1449.3px;top:707.3px;width:120.5px;height:55.700000000000045px;line-height:56.4px">0</div>
<div class="td" style="left:1569.8px;top:707.3px;width:121.29999999999995px;height:55.700000000000045px;line-height:56.4px">59.4 %</div>
<div class="td" style="left:1691.1px;top:707.3px;width:179.5px;height:55.700000000000045px"></div>
<div class="btn" style="left:1700px;top:723.0px;width:50px;height:25px;line-height:25px">详情</div>
<div class="btn" style="left:1763px;top:723.0px;width:72px;height:25px;line-height:25px">导出详情</div>
<div class="td" style="left:112px;top:763px;width:323.9px;height:8.5px;border-bottom:none"></div>
<div class="td" style="left:435.9px;top:763px;width:162.39999999999998px;height:8.5px;border-bottom:none"></div>
<div class="td" style="left:598.3px;top:763px;width:127.80000000000007px;height:8.5px;border-bottom:none"></div>
<div class="td" style="left:726.1px;top:763px;width:120.10000000000002px;height:8.5px;border-bottom:none"></div>
<div class="td" style="left:846.2px;top:763px;width:120.89999999999998px;height:8.5px;border-bottom:none"></div>
<div class="td" style="left:967.1px;top:763px;width:121.19999999999993px;height:8.5px;border-bottom:none"></div>
<div class="td" style="left:1088.3px;top:763px;width:120.10000000000014px;height:8.5px;border-bottom:none"></div>
<div class="td" style="left:1208.4px;top:763px;width:120.69999999999982px;height:8.5px;border-bottom:none"></div>
<div class="td" style="left:1329.1px;top:763px;width:120.20000000000005px;height:8.5px;border-bottom:none"></div>
<div class="td" style="left:1449.3px;top:763px;width:120.5px;height:8.5px;border-bottom:none"></div>
<div class="td" style="left:1569.8px;top:763px;width:121.29999999999995px;height:8.5px;border-bottom:none"></div>
<div class="td" style="left:1691.1px;top:763px;width:179.5px;height:8.5px;border-bottom:none"></div>
<div class="abs" style="left:1870.6px;top:540.5px;width:7.4px;height:231px;background:#cfcfcf"></div>
<div class="abs" style="left:1870.6px;top:540.5px;width:7.4px;height:73px;background:#7d7d7d"></div>
</body></html>
